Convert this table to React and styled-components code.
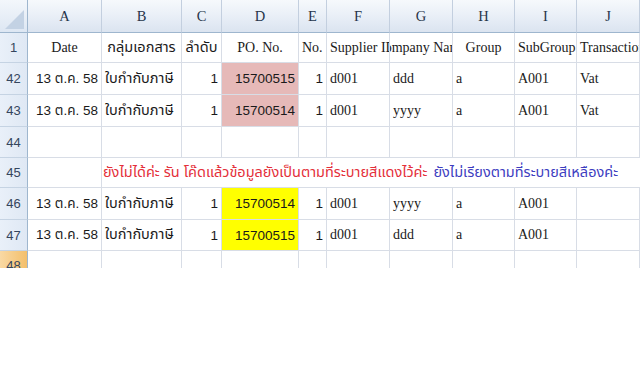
import styled, { createGlobalStyle } from "styled-components";

const GlobalStyle = createGlobalStyle`
  html, body {
    margin: 0;
    padding: 0;
    background: #ffffff;
  }
`;

const columns = ["A", "B", "C", "D", "E", "F", "G", "H", "I", "J"];

const heading = [
  { text: "Date", align: "center", font: "serif" },
  { text: "กลุ่มเอกสาร", align: "center", font: "thai" },
  { text: "ลำดับ", align: "center", font: "thai" },
  { text: "PO. No.", align: "center", font: "serif" },
  { text: "No.", align: "left", font: "serif" },
  { text: "Supplier ID", align: "left", font: "serif" },
  { text: "Company Name", align: "center", font: "serif" },
  { text: "Group", align: "center", font: "serif" },
  { text: "SubGroup", align: "left", font: "serif" },
  { text: "Transaction", align: "left", font: "serif" },
];

const dataRows = [
  { num: 42, po: "15700515", fill: "#e6b9b8", company: "ddd", tx: "Vat" },
  { num: 43, po: "15700514", fill: "#e6b9b8", company: "yyyy", tx: "Vat" },
];

const lowerRows = [
  { num: 46, po: "15700514", fill: "#ffff00", company: "yyyy", tx: "" },
  { num: 47, po: "15700515", fill: "#ffff00", company: "ddd", tx: "" },
];

function DataRow({ row }) {
  return (
    <>
      <RowHead>{row.num}</RowHead>
      <Cell $align="right" $font="mixed">13 ต.ค. 58</Cell>
      <Cell $align="left" $font="thai">ใบกำกับภาษี</Cell>
      <Cell $align="right" $font="sans">1</Cell>
      <Cell $align="right" $font="sans" $bg={row.fill}>{row.po}</Cell>
      <Cell $align="right" $font="sans">1</Cell>
      <Cell $align="left">d001</Cell>
      <Cell $align="left">{row.company}</Cell>
      <Cell $align="left">a</Cell>
      <Cell $align="left">A001</Cell>
      <Cell $align="left">{row.tx}</Cell>
    </>
  );
}

function EmptyRow({ num, selected }) {
  return (
    <>
      <RowHead $selected={selected}>{num}</RowHead>
      {columns.map(c => (
        <Cell key={c} />
      ))}
    </>
  );
}

export default function App() {
  return (
    <>
      <GlobalStyle />
      <Page>
        <Sheet>
          <Corner>
            <CornerMark />
          </Corner>
          {columns.map(c => (
            <ColHead key={c}>{c}</ColHead>
          ))}

          <RowHead>1</RowHead>
          {heading.map(h => (
            <Cell key={h.text} $align={h.align} $font={h.font}>
              <Clip $align={h.align}>{h.text}</Clip>
            </Cell>
          ))}

          {dataRows.map(r => (
            <DataRow key={r.num} row={r} />
          ))}

          <EmptyRow num={44} />

          <RowHead>45</RowHead>
          <Cell />
          <NoteCell>
            <Red>ยังไม่ได้ค่ะ รัน โค๊ดแล้วข้อมูลยังเป็นตามที่ระบายสีแดงไว้ค่ะ</Red>
            <Blue>ยังไม่เรียงตามที่ระบายสีเหลืองค่ะ</Blue>
          </NoteCell>

          {lowerRows.map(r => (
            <DataRow key={r.num} row={r} />
          ))}

          <EmptyRow num={48} selected />
        </Sheet>
      </Page>
    </>
  );
}

// Estilos
const fonts = {
  serif: `"Liberation Serif", "DejaVu Serif", serif`,
  sans: `"Liberation Sans", Arial, sans-serif`,
  thai: `"Liberation Sans", "Noto Sans Thai", "Noto Sans", sans-serif`,
  mixed: `"Liberation Sans", "Noto Sans Thai", "Noto Sans", sans-serif`,
};

const sizes = {
  serif: "14px",
  sans: "13.5px",
  thai: "14.5px",
  mixed: "13.5px",
};

const Page = styled.div`
  width: 640px;
  height: 386px;
  overflow: hidden;
  background: #ffffff;
`;

const Sheet = styled.div`
  display: grid;
  grid-template-columns: 28px 74px 80px 40px 77px 28px 63px 63px 62px 62px 63px;
  grid-template-rows: 33px 30px 32px 32px 31px 30px 32px 31px 30px;
  height: 268px;
  overflow: hidden;
  background: #ffffff;
`;

const Corner = styled.div`
  position: relative;
  background: linear-gradient(#f3f7fb, #dde7f3);
  border-right: 1px solid #9eb6ce;
  border-bottom: 1px solid #9eb6ce;
`;

const CornerMark = styled.div`
  position: absolute;
  right: 3px;
  bottom: 3px;
  width: 0;
  height: 0;
  border-left: 19px solid transparent;
  border-bottom: 19px solid #c3d2e4;
`;

const ColHead = styled.div`
  display: flex;
  align-items: center;
  justify-content: center;
  background: linear-gradient(#f6f9fc 0%, #e9eff7 50%, #dbe4f0 100%);
  border-right: 1px solid #c3cfdf;
  border-bottom: 1px solid #9eb6ce;
  font-family: ${fonts.serif};
  font-size: 14.5px;
  color: #27354a;
`;

const RowHead = styled.div`
  display: flex;
  align-items: center;
  justify-content: center;
  background: ${p =>
    p.$selected
      ? "linear-gradient(90deg, #f9d9a4, #f3bf6b)"
      : "linear-gradient(90deg, #e9f0f9, #dfe8f4)"};
  border-right: 1px solid #9eb6ce;
  border-bottom: 1px solid #c5d3e3;
  font-family: ${fonts.sans};
  font-size: 13px;
  color: #34455d;
`;

const Cell = styled.div`
  display: flex;
  align-items: center;
  justify-content: ${p =>
    p.$align === "right" ? "flex-end" : p.$align === "center" ? "center" : "flex-start"};
  padding: 0 3px;
  min-width: 0;
  overflow: hidden;
  white-space: nowrap;
  background: ${p => p.$bg || "#ffffff"};
  border-right: 1px solid #d8dde6;
  border-bottom: 1px solid #d8dde6;
  font-family: ${p => fonts[p.$font] || fonts.serif};
  font-size: ${p => sizes[p.$font] || sizes.serif};
  color: #1a1a1a;
`;

const Clip = styled.span`
  display: block;
  flex-shrink: 0;
  text-align: ${p => p.$align};
`;

const NoteCell = styled.div`
  grid-column: 3 / span 9;
  display: flex;
  align-items: center;
  gap: 6px;
  white-space: nowrap;
  overflow: hidden;
  padding: 0 1px;
  border-bottom: 1px solid #d8dde6;
  font-family: ${fonts.thai};
  font-size: 14.5px;
`;

const Red = styled.span`
  color: #e42f3a;
`;

const Blue = styled.span`
  color: #3d3dbf;
`;
